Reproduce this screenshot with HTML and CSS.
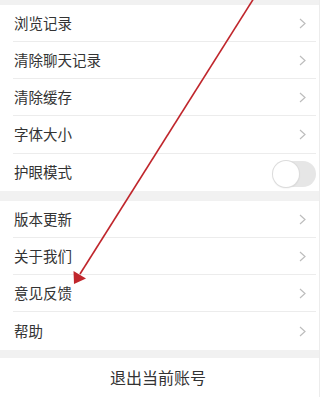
FILE: index.html
```html
<!DOCTYPE html>
<html lang="zh">
<head>
<meta charset="utf-8">
<link rel="stylesheet" href="styles.css">
</head>
<body>
<div class="page">
  <div class="gap top"></div>
  <div class="group">
    <div class="row"><span class="label">浏览记录</span><svg class="chev" viewBox="0 0 7 11"><polyline points="1,1 6,5.5 1,10"/></svg></div>
    <div class="row"><span class="label">清除聊天记录</span><svg class="chev" viewBox="0 0 7 11"><polyline points="1,1 6,5.5 1,10"/></svg></div>
    <div class="row"><span class="label">清除缓存</span><svg class="chev" viewBox="0 0 7 11"><polyline points="1,1 6,5.5 1,10"/></svg></div>
    <div class="row tall"><span class="label">字体大小</span><svg class="chev" viewBox="0 0 7 11"><polyline points="1,1 6,5.5 1,10"/></svg></div>
    <div class="row last"><span class="label">护眼模式</span><span class="toggle"><span class="knob"></span></span></div>
  </div>
  <div class="gap mid"></div>
  <div class="group">
    <div class="row"><span class="label">版本更新</span><svg class="chev" viewBox="0 0 7 11"><polyline points="1,1 6,5.5 1,10"/></svg></div>
    <div class="row"><span class="label">关于我们</span><svg class="chev" viewBox="0 0 7 11"><polyline points="1,1 6,5.5 1,10"/></svg></div>
    <div class="row"><span class="label">意见反馈</span><svg class="chev" viewBox="0 0 7 11"><polyline points="1,1 6,5.5 1,10"/></svg></div>
    <div class="row tall last"><span class="label">帮助</span><svg class="chev" viewBox="0 0 7 11"><polyline points="1,1 6,5.5 1,10"/></svg></div>
  </div>
  <div class="gap bottom"></div>
  <div class="logout">退出当前账号</div>
  <svg class="arrow" viewBox="0 0 320 397" width="320" height="397">
    <line x1="254" y1="-2" x2="80" y2="274" />
    <polygon points="74,284 73.5,271 86,278.5" />
  </svg>
</div>
</body>
</html>
```
FILE: styles.css
```css
* { box-sizing: border-box; }
html, body { margin: 0; padding: 0; }
body {
  width: 320px;
  height: 397px;
  overflow: hidden;
  background: #fff;
  font-family: "Noto Sans CJK SC", "Noto Sans", sans-serif;
  color: #333;
}
.page {
  position: relative;
  width: 320px;
  height: 397px;
  border-right: 1px solid #ececec;
  padding-right: 3px;
  background: #fff;
}
.gap { background: #f1f1f1; margin-right: -3px; }
.gap.top { height: 5px; }
.gap.mid { height: 10px; }
.gap.bottom { height: 8px; }
.group { background: #fff; padding-left: 13px; }
.row {
  height: 37px;
  display: flex;
  align-items: center;
  justify-content: space-between;
  border-bottom: 1px solid #ececec;
  padding-left: 1px;
  padding-right: 10px;
}
.row.tall { height: 38px; }
.row.last { border-bottom: none; }
.label {
  font-size: 14.5px;
  line-height: 1;
  color: #333;
}
.chev {
  width: 7px;
  height: 11px;
  fill: none;
  stroke: #bdbdbd;
  stroke-width: 1.2;
}
.toggle {
  position: relative;
  width: 43px;
  height: 26px;
  border-radius: 13px;
  background: #e6e6e6;
  margin-right: -10px;
  margin-top: 2px;
}
.knob {
  position: absolute;
  left: 0;
  top: 0;
  width: 26px;
  height: 26px;
  border-radius: 50%;
  background: #fff;
  box-shadow: 0 0 0 1px #dcdcdc, 0 1px 2px rgba(0,0,0,0.12);
}
.logout {
  height: 39px;
  display: flex;
  align-items: center;
  justify-content: center;
  font-size: 16px;
  color: #333;
  padding-bottom: 1px;
}
.arrow {
  position: absolute;
  left: 0;
  top: 0;
  pointer-events: none;
}
.arrow line {
  stroke: #c0262c;
  stroke-width: 1.6;
}
.arrow polygon {
  fill: #c0262c;
}
```
